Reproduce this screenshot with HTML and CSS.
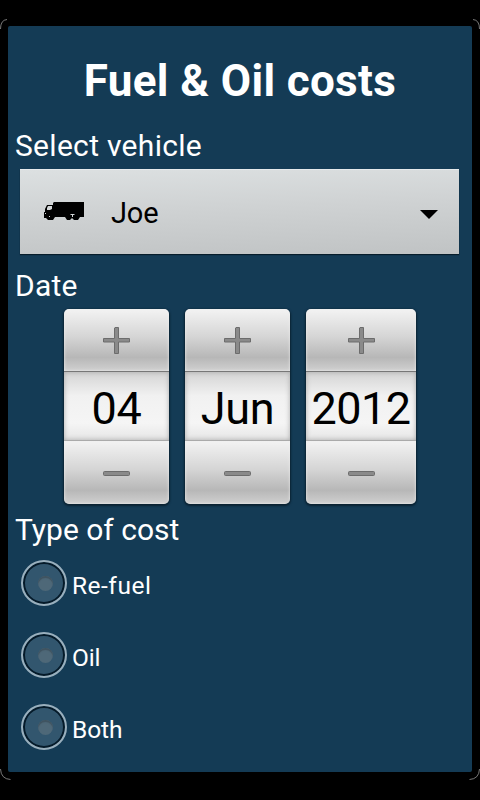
FILE: index.html
```
<!DOCTYPE html>
<html>
<head>
  <meta charset="utf-8">
  <title>Fuel &amp; Oil costs</title>
  <link rel="stylesheet" href="styles.css">
</head>
<body>
  <div class="frame">
    <div class="panel">
      <h1>Fuel &amp; Oil costs</h1>

      <h2 class="label-vehicle">Select vehicle</h2>
      <div class="spinner">
        <svg class="truck" width="42" height="20" viewBox="0 0 42 20">
          <path d="M11 1H41V16H37L35 19H31L29 17L27 19H24L22 16H12L10 19H5L3 17H1V11H2V8L4 4H10V2Z"/>
          <path class="glass" d="M4 9V7L5 5H9V8L7 9Z"/>
          <path class="glass" d="M27 13H32L31 14H30V16H29V14H28Z"/>
          <path class="glass" d="M2 12H3V13H2ZM6 15H7V16H6Z"/>
        </svg>
        <span class="vehicle">Joe</span>
        <svg class="arrow" width="18" height="9" viewBox="0 0 18 9"><path d="M0 0H18L9 9Z"/></svg>
      </div>

      <h2 class="label-date">Date</h2>
      <div class="date-picker">
        <div class="picker">
          <button class="plus"><svg width="27" height="27" viewBox="0 0 27 27"><path class="edge" d="M12 0.5H15.5V11.5H26.5V15H15.5V26.5H11.5V15H0.5V11.5H11.5V1Z"/></svg></button>
          <div class="value">04</div>
          <button class="minus"><svg width="27" height="5" viewBox="0 0 27 5"><rect class="edge" x="0.5" y="0.5" width="26" height="4" rx="1"/></svg></button>
        </div>
        <div class="picker">
          <button class="plus"><svg width="27" height="27" viewBox="0 0 27 27"><path class="edge" d="M12 0.5H15.5V11.5H26.5V15H15.5V26.5H11.5V15H0.5V11.5H11.5V1Z"/></svg></button>
          <div class="value">Jun</div>
          <button class="minus"><svg width="27" height="5" viewBox="0 0 27 5"><rect class="edge" x="0.5" y="0.5" width="26" height="4" rx="1"/></svg></button>
        </div>
        <div class="picker year">
          <button class="plus"><svg width="27" height="27" viewBox="0 0 27 27"><path class="edge" d="M12 0.5H15.5V11.5H26.5V15H15.5V26.5H11.5V15H0.5V11.5H11.5V1Z"/></svg></button>
          <div class="value">2012</div>
          <button class="minus"><svg width="27" height="5" viewBox="0 0 27 5"><rect class="edge" x="0.5" y="0.5" width="26" height="4" rx="1"/></svg></button>
        </div>
      </div>

      <h2 class="label-type">Type of cost</h2>
      <div class="radio-group">
        <label class="radio"><span class="circle"><span class="dot"></span></span><span class="name refuel">Re-fuel</span></label>
        <label class="radio"><span class="circle"><span class="dot"></span></span><span class="name">Oil</span></label>
        <label class="radio"><span class="circle"><span class="dot"></span></span><span class="name">Both</span></label>
      </div>
    </div>
    <svg class="corner top-left" width="9" height="10" viewBox="0 0 9 10"><path d="M0.5 10Q0.5 1 7 0.5"/></svg>
    <svg class="corner top-right" width="9" height="10" viewBox="0 0 9 10"><path d="M0.5 10Q0.5 1 7 0.5"/></svg>
    <svg class="corner bottom-left" width="11" height="11" viewBox="0 0 11 11"><path d="M0.5 11Q1 1 10.5 0.5"/></svg>
    <svg class="corner bottom-right" width="11" height="11" viewBox="0 0 11 11"><path d="M0.5 11Q1 1 10.5 0.5"/></svg>
  </div>
</body>
</html>
```
FILE: styles.css
```
* {
  box-sizing: border-box;
}

body {
  margin: 0;
  background: #000;
  color: #fff;
  font-family: Roboto, "Liberation Sans", sans-serif;
}

.frame {
  position: relative;
  width: 480px;
  height: 800px;
  padding: 26px 8px 28px;
  overflow: hidden;
}

.panel {
  height: 746px;
  background: #143b55;
  border-radius: 2px;
}

h1 {
  margin: 0;
  height: 102px;
  font-size: 44px;
  font-weight: bold;
  line-height: 110px;
  letter-spacing: 0.35px;
  text-align: center;
  white-space: nowrap;
}

h2 {
  margin: 0;
  padding-left: 7px;
  font-size: 30px;
  font-weight: normal;
  line-height: 36px;
  white-space: nowrap;
}

.label-vehicle {
  height: 41px;
  letter-spacing: 0.3px;
}

.spinner {
  display: flex;
  align-items: center;
  width: 439px;
  height: 85px;
  margin-left: 12px;
  padding: 0 21px 0 23px;
  background: linear-gradient(178deg, #dce0e1, #cfd2d3 45%, #c0c3c4);
  border-top: 1px solid #e6eaeb;
  box-shadow: 0 1px 1px #071d2b;
  color: #000;
}

.truck {
  margin-top: -2px;
}

.glass {
  fill: #d4d7d8;
}

.vehicle {
  margin-left: 26px;
  padding-top: 1px;
  font-size: 29px;
  letter-spacing: -0.2px;
}

.arrow {
  margin: 5px 0 0 auto;
}

.label-date {
  height: 55px;
  padding-top: 14px;
  letter-spacing: 0.2px;
}

.date-picker {
  display: flex;
  gap: 16px;
  padding-left: 56px;
}

.picker {
  width: 105px;
  height: 195px;
  border-radius: 5px;
  overflow: hidden;
  box-shadow: 0 1px 2px 1px #0a2232;
}

.year {
  width: 110px;
}

button {
  display: flex;
  align-items: center;
  justify-content: center;
  width: 100%;
  height: 62px;
  padding: 0;
  border: 0;
  background: linear-gradient(#f3f3f3, #d5d5d5 45%, #b7b7b7 78%, #d0d0d0);
  box-shadow: inset 0 0 3px #eee;
}

.minus {
  height: 63px;
  padding-top: 1px;
}

.edge {
  fill: #8a8a8a;
  stroke: #6c6c6c;
}

.value {
  height: 70px;
  border-top: 1px solid #777;
  border-bottom: 1px solid #aaa;
  background: linear-gradient(#d4d4d4, #f1f1f1 35%, #f5f5f5 75%, #e6e6e6);
  box-shadow: inset 0 0 5px #aaa;
  color: #000;
  font-size: 45px;
  line-height: 74px;
  letter-spacing: -0.3px;
  text-align: center;
  white-space: nowrap;
}

.year .value {
  letter-spacing: -0.6px;
}

.label-type {
  height: 43px;
  padding-top: 8px;
}

.radio-group {
  padding-left: 13px;
}

.radio {
  display: flex;
  align-items: center;
  height: 72px;
}

.circle {
  display: flex;
  align-items: center;
  justify-content: center;
  width: 46px;
  height: 46px;
  border: 2px solid #99afbd;
  border-radius: 50%;
  background: #32566e;
  box-shadow: inset 0 0 0 2px #051a29;
}

.dot {
  width: 15px;
  height: 15px;
  margin-left: 2px;
  border-radius: 50%;
  background: #4e6878;
  box-shadow: inset 0 2px 1px #3f5360;
}

.name {
  margin-left: 5px;
  padding-top: 4px;
  font-size: 24.5px;
  letter-spacing: -0.1px;
}

.refuel {
  letter-spacing: 0.5px;
}

.corner {
  position: absolute;
  fill: none;
  stroke: #aaa;
  stroke-width: 0.7;
}

.top-left {
  top: 19px;
  left: 0;
}

.top-right {
  top: 19px;
  right: 0;
  transform: scaleX(-1);
}

.bottom-left {
  top: 769px;
  left: 0;
  transform: scaleY(-1);
}

.bottom-right {
  top: 769px;
  right: 0;
  transform: scale(-1, -1);
}
```
